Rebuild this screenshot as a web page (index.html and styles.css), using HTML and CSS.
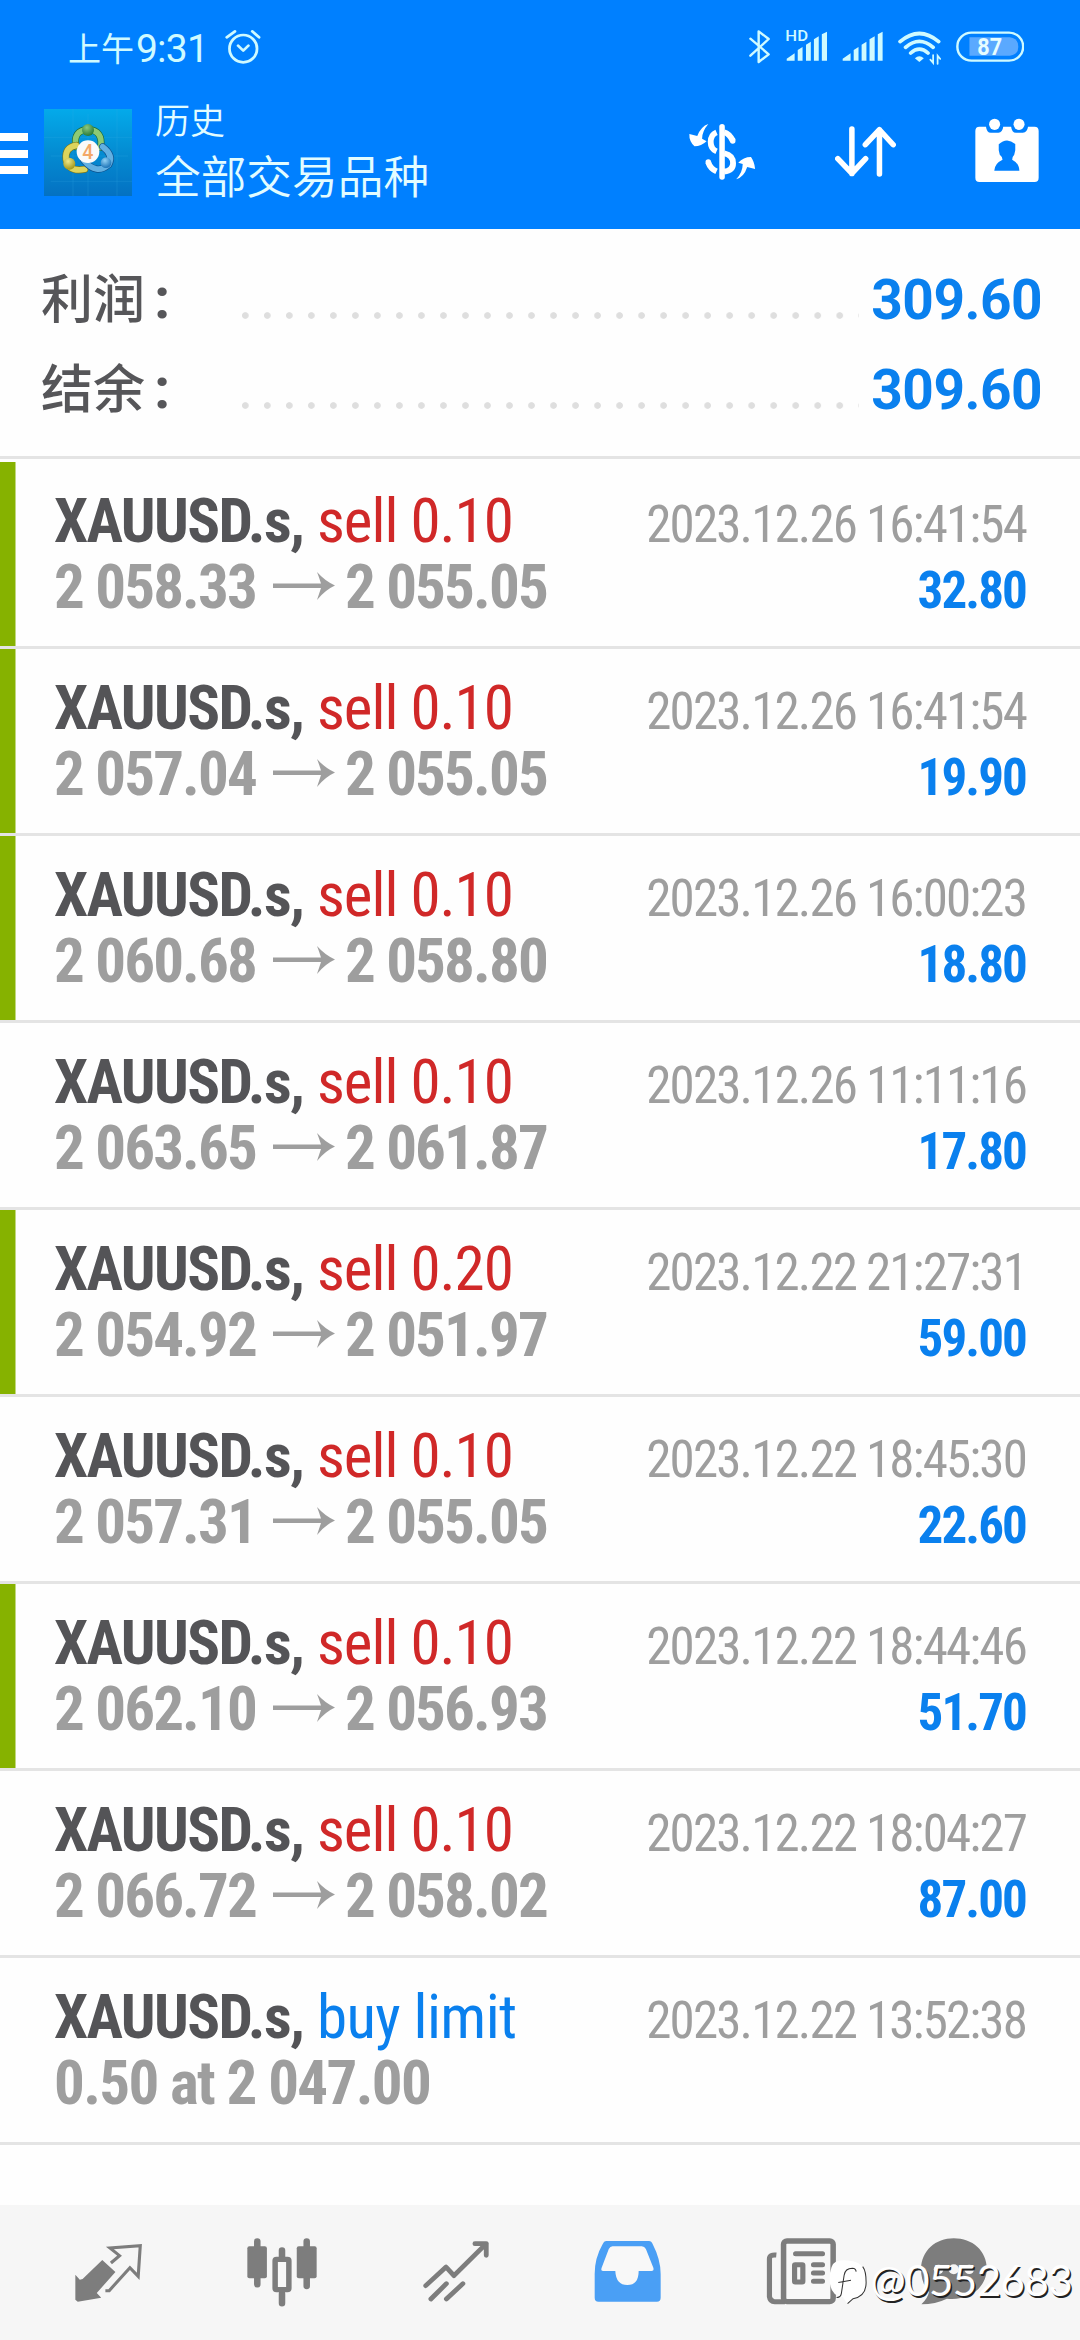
FILE: index.html
```html
<!DOCTYPE html>
<html lang="zh-CN">
<head>
<meta charset="utf-8">
<title>历史</title>
<link rel="stylesheet" href="styles.css">
</head>
<body>
<svg class="defs" aria-hidden="true">
  <symbol id="arrow" viewBox="0 0 62 30" preserveAspectRatio="none"><path d="M0 12.500H48Q46 6 44 1Q52 10 62 14.500Q52 19 44 29Q46 23 48 17H0Z" fill="#9e9e9e"/></symbol>
</svg>
<header class="top">
  <div class="status">
    <span class="clock">上午<b>9:31</b></span>
    <svg class="alarm" viewBox="652 85 104 115" preserveAspectRatio="none" fill="none" stroke="#cffaff" stroke-width="8" stroke-linecap="round" stroke-linejoin="round"><ellipse cx="705" cy="147" rx="40" ry="41"/><path d="M690 138L705 153L720 138M657 113L681 95M731 95L751 113"/></svg>
    <div class="signals">
      <svg style="width:21.400px" viewBox="604 85 62 115" preserveAspectRatio="none" fill="none" stroke="#cffaff" stroke-width="7" stroke-linejoin="round" stroke-linecap="round"><path d="M608 117L661 164L632 187V95L661 118L608 168"/></svg>
      <svg style="width:42.700px" viewBox="706 85 124 115" preserveAspectRatio="none" fill="#cffaff"><text x="707" y="125" font-family="Roboto" font-weight="500" font-size="44" textLength="66" lengthAdjust="spacingAndGlyphs">HD</text><path d="M711 183V177L734 161V183ZM743 183V151L757 142V183ZM767 183V135L781 126V183ZM790 183V119L804 110V183ZM813 183V104L828 96V183Z"/></svg>
      <svg style="width:41.300px" viewBox="872 85 120 115" preserveAspectRatio="none" fill="#cffaff"><path d="M874 183V177L897 161V183ZM906 183V151L920 142V183ZM929 183V135L943 126V183ZM952 183V119L967 110V183ZM976 183V104L990 96V183Z"/></svg>
      <svg style="width:43.400px" viewBox="1036 85 126 115" preserveAspectRatio="none" fill="none" stroke="#cffaff" stroke-width="11" stroke-linecap="round"><path d="M1042 126Q1098 77 1154 126M1058 143Q1098 107 1138 143M1073 160Q1098 137 1123 160"/><path d="M1085 176Q1098 163 1111 176L1098 187Z" fill="#cffaff" stroke="none"/><path d="M1138 166V190L1130 180M1151 193V168L1159 178" stroke-width="5"/></svg>
      <svg style="width:68.500px" viewBox="1204 85 199 115" preserveAspectRatio="none"><rect x="1208" y="99" width="191" height="84" rx="41" fill="none" stroke="#cffaff" stroke-width="7"/><path d="M1243 113H1360Q1385 116 1385 141T1360 168H1243Z" fill="#5aa9ff"/><text x="1266" y="166" font-family="Roboto" font-weight="700" font-size="70" fill="#e6fdff" textLength="72" lengthAdjust="spacingAndGlyphs">87</text></svg>
    </div>
  </div>
  <div class="toolbar">
    <div class="menu"><i></i><i></i><i></i></div>
    <svg class="logo" viewBox="132 57 264 261" preserveAspectRatio="none">
      <defs>
        <linearGradient id="bg" x1="0" y1="0" x2="0" y2="1"><stop offset="0" stop-color="#04aaea"/><stop offset=".5" stop-color="#048cd2"/><stop offset="1" stop-color="#0471c2"/></linearGradient>
        <radialGradient id="gr" cx=".4" cy=".3" r=".7"><stop offset="0" stop-color="#8cc880"/><stop offset="1" stop-color="#287a38"/></radialGradient>
        <radialGradient id="ye" cx=".4" cy=".3" r=".7"><stop offset="0" stop-color="#eee88a"/><stop offset="1" stop-color="#a39618"/></radialGradient>
        <radialGradient id="bl" cx=".4" cy=".3" r=".7"><stop offset="0" stop-color="#90d0f4"/><stop offset="1" stop-color="#1c74b8"/></radialGradient>
      </defs>
      <path d="M132 57H396V318H132Z" fill="url(#bg)"/>
      <path d="M219 57V318M264 72V318M351 57V318M132 142H396M152 198H384M152 274H396" stroke="#3fb0e6" stroke-width="1.500" opacity=".4"/>
      <g fill="none" stroke-linecap="round">
        <path d="M228 170Q218 122 264 118Q310 122 302 172" stroke="#1e6a34" stroke-width="21"/><path d="M228 170Q218 122 264 118Q310 122 302 172" stroke="#8cca74" stroke-width="17"/>
        <path d="M229 166Q194 172 198 208Q206 247 254 238" stroke="#7c7618" stroke-width="21"/><path d="M229 166Q194 172 198 208Q206 247 254 238" stroke="#ddd45c" stroke-width="17"/>
        <path d="M308 170Q342 196 326 224Q290 256 252 212" stroke="#10518c" stroke-width="21"/><path d="M308 170Q342 196 326 224Q290 256 252 212" stroke="#62b0e2" stroke-width="17"/>
      </g>
      <circle cx="264" cy="120" r="18" fill="url(#gr)"/><circle cx="208" cy="221" r="18" fill="url(#ye)"/><circle cx="318" cy="218" r="16" fill="url(#bl)"/>
      <circle cx="264" cy="185" r="34" fill="#fafafa"/><text x="247" y="206" font-family="Roboto" font-weight="500" font-size="59" fill="#f3a868">4</text>
    </svg>
    <div class="titles"><div class="t1">历史</div><div class="t2">全部交易品种</div></div>
    <div class="actions">
      <svg style="width:66.800px" viewBox="432 355 194 195" preserveAspectRatio="none" fill="none" stroke="#fff" stroke-width="16" stroke-linecap="round"><path d="M528 381V532"/><path d="M512 398Q495 405 495 427Q495 448 512 455M534 398Q549 402 559 423M534 461Q560 467 560 491Q560 513 534 516M512 515Q494 507 488 488" stroke-width="17" stroke-linecap="butt"/><path d="M559 421V424M488 488V487"/><path d="M488 373Q467 380 456 409L433 403Q432 425 448 440Q468 440 483 425L470 417Q470 395 488 373ZM569 539Q592 532 601 502L624 508Q622 486 612 472Q590 472 575 489L588 493Q588 518 569 539Z" fill="#fff" stroke="none"/></svg>
      <svg style="width:61px" viewBox="855 355 177 195" preserveAspectRatio="none" fill="none" stroke="#fff" stroke-width="16" stroke-linecap="round" stroke-linejoin="round"><path d="M904 388V522M863 477L904 521L944 477M984 523V390M943 435L984 390L1024 435"/></svg>
      <svg style="width:64px" viewBox="1262 355 186 195" preserveAspectRatio="none" fill="#fff"><path d="M1275 381H1294Q1296 399 1308 399H1330Q1342 398 1344 381H1367Q1369 399 1381 399H1401Q1414 398 1416 381H1435Q1447 381 1447 394V534Q1447 547 1435 547H1275Q1263 547 1263 534V394Q1263 381 1275 381Z"/><ellipse cx="1319" cy="374" rx="16" ry="17"/><ellipse cx="1390" cy="374" rx="16" ry="17"/><path d="M1331 434Q1354 411 1379 433V452L1376 465Q1370 471 1370 480Q1390 490 1391 513H1318Q1319 491 1342 480Q1342 471 1334 465L1331 452Z" fill="#0080ff"/></svg>
    </div>
  </div>
</header>
<section class="summary">
  <div class="sum"><span class="label">利润<em>:</em></span><span class="dots"></span><span class="total">309.60</span></div>
  <div class="sum"><span class="label">结余<em>:</em></span><span class="dots"></span><span class="total">309.60</span></div>
</section>
<main class="deals">
  <article class="deal tp"><div class="line"><span class="sym">XAUUSD.s,</span><span class="side">sell 0.10</span><span class="time">2023.12.26 16:41:54</span></div><div class="line"><span class="price">2 058.33</span><svg class="to"><use href="#arrow"/></svg><span class="price">2 055.05</span><span class="profit">32.80</span></div></article>
  <article class="deal tp"><div class="line"><span class="sym">XAUUSD.s,</span><span class="side">sell 0.10</span><span class="time">2023.12.26 16:41:54</span></div><div class="line"><span class="price">2 057.04</span><svg class="to"><use href="#arrow"/></svg><span class="price">2 055.05</span><span class="profit">19.90</span></div></article>
  <article class="deal tp"><div class="line"><span class="sym">XAUUSD.s,</span><span class="side">sell 0.10</span><span class="time">2023.12.26 16:00:23</span></div><div class="line"><span class="price">2 060.68</span><svg class="to"><use href="#arrow"/></svg><span class="price">2 058.80</span><span class="profit">18.80</span></div></article>
  <article class="deal"><div class="line"><span class="sym">XAUUSD.s,</span><span class="side">sell 0.10</span><span class="time">2023.12.26 11:11:16</span></div><div class="line"><span class="price">2 063.65</span><svg class="to"><use href="#arrow"/></svg><span class="price">2 061.87</span><span class="profit">17.80</span></div></article>
  <article class="deal tp"><div class="line"><span class="sym">XAUUSD.s,</span><span class="side">sell 0.20</span><span class="time">2023.12.22 21:27:31</span></div><div class="line"><span class="price">2 054.92</span><svg class="to"><use href="#arrow"/></svg><span class="price">2 051.97</span><span class="profit">59.00</span></div></article>
  <article class="deal"><div class="line"><span class="sym">XAUUSD.s,</span><span class="side">sell 0.10</span><span class="time">2023.12.22 18:45:30</span></div><div class="line"><span class="price">2 057.31</span><svg class="to"><use href="#arrow"/></svg><span class="price">2 055.05</span><span class="profit">22.60</span></div></article>
  <article class="deal tp"><div class="line"><span class="sym">XAUUSD.s,</span><span class="side">sell 0.10</span><span class="time">2023.12.22 18:44:46</span></div><div class="line"><span class="price">2 062.10</span><svg class="to"><use href="#arrow"/></svg><span class="price">2 056.93</span><span class="profit">51.70</span></div></article>
  <article class="deal"><div class="line"><span class="sym">XAUUSD.s,</span><span class="side">sell 0.10</span><span class="time">2023.12.22 18:04:27</span></div><div class="line"><span class="price">2 066.72</span><svg class="to"><use href="#arrow"/></svg><span class="price">2 058.02</span><span class="profit">87.00</span></div></article>
  <article class="deal"><div class="line"><span class="sym">XAUUSD.s,</span><span class="side buy">buy limit</span><span class="time">2023.12.22 13:52:38</span></div><div class="line"><span class="price order">0.50 at 2 047.00</span></div></article>
</main>
<nav class="tabs">
  <svg style="width:67px" viewBox="218 170 194 210" preserveAspectRatio="none"><path d="M297 239L335 275L281 338L294 352L226 364L219 358V283L232 298L240 296Z" fill="#7d7d7d"/><path d="M322 248L347 226L319 203L407 196L401 288L377 262L317 331L306 331" fill="none" stroke="#7d7d7d" stroke-width="9"/></svg>
  <svg style="width:70px" viewBox="714 170 204 210" preserveAspectRatio="none" fill="none" stroke="#7d7d7d" stroke-width="19" stroke-linecap="round"><path d="M744 183V312M888 183V317M816 210V230M816 340V369"/><rect x="715" y="198" width="57" height="96" rx="6" fill="#7d7d7d" stroke="none"/><rect x="859" y="198" width="58" height="96" rx="6" fill="#7d7d7d" stroke="none"/><rect x="796" y="237" width="40" height="91" rx="4" stroke-width="16" fill="#f8f8f8"/></svg>
  <svg style="width:66px" viewBox="1222 170 192 210" preserveAspectRatio="none" fill="none" stroke="#7d7d7d" stroke-width="14" stroke-linecap="round" stroke-linejoin="round"><path d="M1230 316L1289 260L1312 286L1406 190M1373 190H1406V225M1245 356L1290 310M1290 356L1338 310"/></svg>
  <svg style="width:67px" viewBox="157 170 195 210" preserveAspectRatio="none"><path d="M192 182H317Q324 182 328 192Q352 240 351 285V352Q351 364 340 364H170Q159 364 159 352V285Q158 235 182 192Q186 182 192 182Z" fill="#4a9ff5"/><path d="M211 198H296Q304 198 308 206L330 263Q332 272 324 272H287Q287 314 254 314Q221 314 219 272H184Q176 272 179 263L200 206Q204 198 211 198Z" fill="#f8f8f8"/></svg>
  <svg style="width:70.600px" viewBox="655 170 205 210" preserveAspectRatio="none" fill="none" stroke="#7d7d7d" stroke-width="15" stroke-linejoin="round"><rect x="706" y="182" width="144" height="182" rx="10" fill="#f8f8f8" stroke-width="16"/><path d="M685 224Q665 222 665 236V349Q667 364 680 364H710"/><path d="M741 220H819M793 253H819M793 278H819M793 303H819" stroke-linecap="round"/><rect x="738" y="253" width="24" height="52" rx="2"/></svg>
  <svg class="chat" style="width:67.500px" viewBox="1100 170 196 210" preserveAspectRatio="none"><path d="M1198 174C1252 174 1294 211 1294 266C1292 325 1240 362 1178 355Q1145 372 1104 372Q1123 353 1126 335Q1103 308 1103 266C1104 211 1145 174 1198 174Z" fill="#7d7d7d"/><g fill="#f6f6f6"><circle cx="1154" cy="267" r="14"/><circle cx="1198" cy="267" r="15"/><circle cx="1243" cy="267" r="14"/></g></svg>
</nav>
<div class="mark"><svg viewBox="840 242 112 136" preserveAspectRatio="none"><path d="M862 246Q842 256 842 300Q842 350 880 354L894 376L914 358Q950 352 950 305Q948 255 910 246Q880 240 862 246Z" fill="#fff"/><path d="M862 355Q874 356 876 343L884 288Q887 267 908 267Q918 268 919 277M867 310L904 303M894 374L910 359Q948 352 948 310Q948 275 938 262" fill="none" stroke="#333" stroke-width="3"/></svg><span>@0552683</span></div>
</body>
</html>
```
FILE: styles.css
```css
* { box-sizing: border-box; }
body {
  margin: 0;
  width: 1080px;
  height: 2340px;
  display: flex;
  flex-direction: column;
  overflow: hidden;
  position: relative;
  background: #fefefe;
  font-family: Roboto, "Noto Sans CJK SC", sans-serif;
}
svg { display: block; flex: none; }
.defs { display: none; }

.top { height: 229px; background: #0080ff; color: #e2fcff; flex: none; }
.status { height: 95px; padding: 28px 56px 0 68px; display: flex; align-items: flex-start; }
.clock { font: 400 33px/38px "Noto Sans CJK SC", sans-serif; display: flex; color: #cffaff; width: 157px; white-space: nowrap; }
.clock b { font: 400 39px/42px Roboto, sans-serif; letter-spacing: -.800px; margin-left: 2px; }
.alarm { width: 35.800px; height: 38.300px; }
.signals { margin-left: auto; display: flex; gap: 14.400px; }
.signals svg { height: 38.300px; }

.toolbar { display: flex; align-items: flex-start; padding-right: 41px; }
.menu { width: 28px; padding-top: 38px; display: grid; gap: 8.500px; }
.menu i { height: 8px; background: #fff; }
.logo { width: 88px; height: 87px; margin: 14px 23px 0 16px; }
.titles { font-family: "Noto Sans CJK SC", sans-serif; font-weight: 350; white-space: nowrap; }
.t1 { font-size: 35px; line-height: 48px; }
.t2 { font-size: 45.700px; line-height: 62px; }
.actions { margin-left: auto; margin-top: 23px; display: flex; gap: 79px; }
.actions svg { height: 65px; }

.summary { height: 230px; padding: 26px 38px 0 41px; border-bottom: 3px solid #e4e4e4; flex: none; }
.sum { height: 90px; display: flex; align-items: center; }
.label { width: 201px; font: 500 52px/90px "Noto Sans CJK SC", sans-serif; color: #565659; white-space: nowrap; padding-bottom: 8px; }
.label em { font: 700 58px/1 Roboto, sans-serif; margin-left: 9px; }
.dots { width: 617px; height: 7px; margin-top: 31px; background: radial-gradient(circle at 3.300px 3.500px, #dedede 2.900px, transparent 3.700px) 0 0 / 22.030px 7px repeat-x; }
.total { margin-left: auto; font-size: 55px; font-weight: 700; letter-spacing: -.5px; color: #0a80ee; }

.deals { margin-top: 3px; flex: 1; }
.deal { height: 187px; padding: 26px 54px 0 54px; border-bottom: 3px solid #e4e4e4; }
.tp { background: linear-gradient(#86b200, #86b200) 0 0 / 15.500px 100% no-repeat; }
.line { height: 66px; line-height: 66px; display: flex; align-items: baseline; font-stretch: 75%; font-family: "Roboto Condensed", Roboto, sans-serif; white-space: nowrap; }
.sym { font-size: 61px; font-weight: 700; letter-spacing: -1.600px; color: #545457; width: 263px; }
.side { font-size: 61px; letter-spacing: -1px; color: #d02828; }
.side.buy { color: #0a80ee; letter-spacing: -.600px; }
.price { font-size: 61px; font-weight: 700; letter-spacing: -1.850px; color: #9e9e9e; }
.price.order { letter-spacing: -1.650px; }
.to { width: 62px; height: 30px; margin: 0 10px 0 17px; align-self: flex-start; position: relative; top: 17px; }
.time { margin-left: auto; font-size: 51px; letter-spacing: -1.850px; color: #9e9e9e; }
.profit { margin-left: auto; font-size: 51px; font-weight: 700; letter-spacing: -1.900px; color: #0a80ee; }

.tabs { height: 135px; background: #f6f6f6; padding: 32px 0 0 75px; display: flex; gap: 105.300px; flex: none; }
.tabs svg { height: 70px; }
.tabs .chat { margin-left: -22px; }
.mark { position: absolute; left: 829px; top: 2260px; display: flex; gap: 3px; color: #fff; font: 400 42px/40px Lato, sans-serif; letter-spacing: -.500px; text-shadow: 1.500px 1.500px .5px #222; }
.mark svg { width: 38.500px; height: 45px; }
```
